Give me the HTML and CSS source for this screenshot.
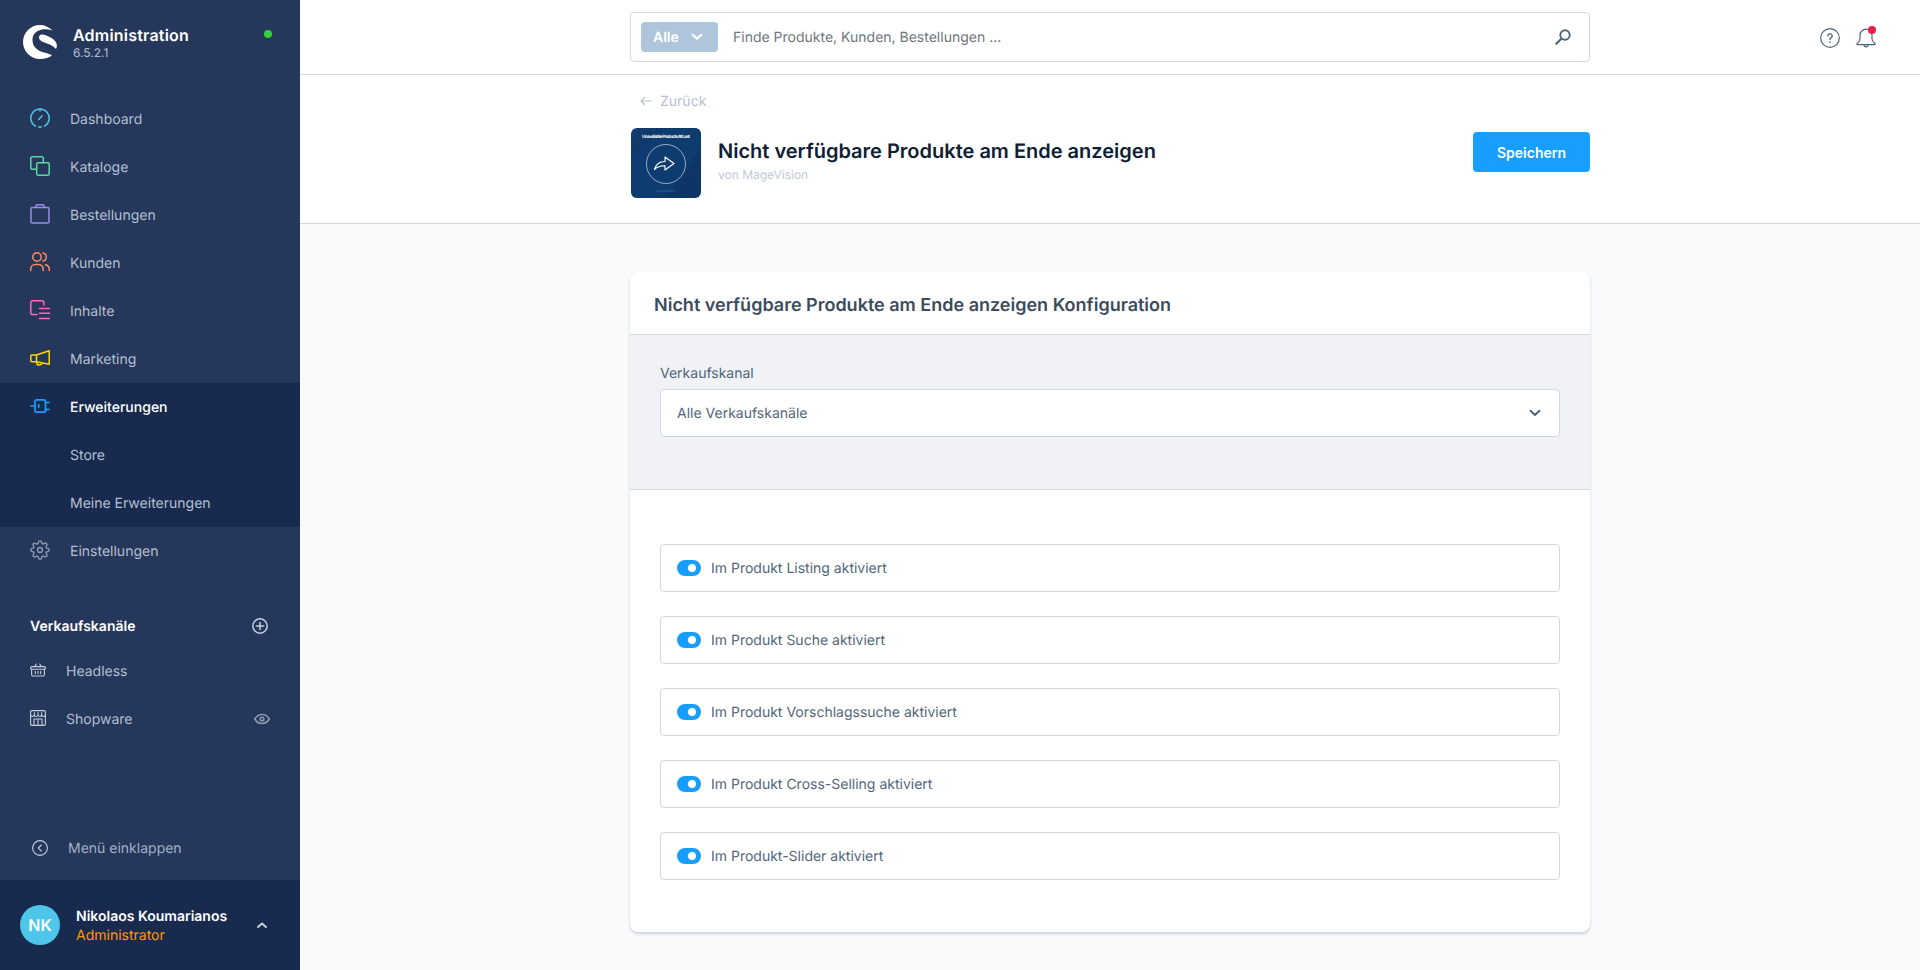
FILE: index.html
```html
<!DOCTYPE html>
<html lang="de">
<head>
    <meta charset="UTF-8">
    <meta name="viewport" content="width=device-width, initial-scale=1.0">
    <title>Nicht verfügbare Produkte am Ende anzeigen</title>
    <link rel="stylesheet" href="styles.css">
</head>
<body>
    <aside class="sidebar">
        <div class="brand">
            <svg class="brand-logo" width="34" height="34" viewBox="0 0 34 34" fill="#fff">
                <path d="M17 0C21.5 0 26 2 29.5 5.5C26 4.500 22 4 19 4.500C12 6 9.500 10 9.500 15C9.500 22 15 26 21 27.500C24 28.300 27 29 29 30.500C26 32.800 22 34 17 34C7.600 34 0 26.400 0 17C0 7.600 7.600 0 17 0Z"/>
                <path d="M19 9.500C24 10 33 14 33.800 19.500C34 21.500 33.500 23 33 24C30 20.500 26 19 21.500 17.500C18.500 16.500 16 15 16 12.500C16 10.500 17.500 9.300 19 9.500Z"/>
            </svg>
            <div class="brand-text">
                <div class="brand-title">Administration</div>
                <div class="brand-version">6.5.2.1</div>
            </div>
            <span class="status-dot"></span>
        </div>

        <nav class="menu">
            <a class="menu-item">
                <svg class="menu-icon" viewBox="0 0 20 20" fill="none" stroke="#4dc6e9" stroke-width="1.500" stroke-linecap="round" stroke-linejoin="round">
                    <path d="M5.500 18.200A9.200 9.200 0 1 1 14.500 18.200"/><path d="M8.700 18.900h2.600"/><path d="M8.700 11.500l3.200-3.600"/><path d="M10 .9v2"/>
                </svg>
                Dashboard
            </a>
            <a class="menu-item">
                <svg class="menu-icon" viewBox="0 0 20 20" fill="none" stroke="#57d9a3" stroke-width="1.500" stroke-linejoin="round">
                    <rect x="6.700" y="6.700" width="12.500" height="12.500" rx="1.500"/>
                    <path d="M6.700 13.300H2.300A1.500 1.500 0 0 1 .8 11.800V2.300A1.500 1.500 0 0 1 2.300 .8h9.500a1.500 1.500 0 0 1 1.500 1.500v4.400"/>
                </svg>
                Kataloge
            </a>
            <a class="menu-item">
                <svg class="menu-icon" viewBox="0 0 20 20" fill="none" stroke="#9a8ee5" stroke-width="1.500" stroke-linejoin="round">
                    <path d="M2.300 3.500h15.400a1.300 1.300 0 0 1 1.300 1.300v12.900a1.300 1.300 0 0 1-1.300 1.300H2.300A1.300 1.300 0 0 1 1 17.700V4.800A1.300 1.300 0 0 1 2.300 3.500Z"/>
                    <path d="M6 3.500V2a1.200 1.200 0 0 1 1.200-1.200h5.600A1.200 1.200 0 0 1 14 2v1.500"/>
                </svg>
                Bestellungen
            </a>
            <a class="menu-item">
                <svg class="menu-icon" viewBox="0 0 20 20" fill="none" stroke="#ff8a5c" stroke-width="1.500" stroke-linecap="round">
                    <circle cx="7" cy="5" r="4.200"/>
                    <path d="M.8 18.500v-1.500a4.500 4.500 0 0 1 4.500-4.500h3.400a4.500 4.500 0 0 1 4.500 4.500v1.500"/>
                    <path d="M13 .9a4.200 4.200 0 0 1 0 8.200"/>
                    <path d="M15.500 12.700a4.500 4.500 0 0 1 3.700 4.300v1.500"/>
                </svg>
                Kunden
            </a>
            <a class="menu-item">
                <svg class="menu-icon" viewBox="0 0 20 20" fill="none" stroke="#ff68b4" stroke-width="1.500" stroke-linecap="round" stroke-linejoin="round">
                    <path d="M7 14.500H2.300A1.500 1.500 0 0 1 .8 13V2.300A1.500 1.500 0 0 1 2.300 .8h10A1.500 1.500 0 0 1 13.800 2.300V5"/>
                    <path d="M9.500 8.500h10M9.500 13.300h10M9.500 18.500h10"/>
                </svg>
                Inhalte
            </a>
            <a class="menu-item">
                <svg class="menu-icon" viewBox="0 0 20 20" fill="none" stroke="#ffd500" stroke-width="1.500" stroke-linejoin="round">
                    <path d="M19.200 2.700V16.300L6.500 13.700V7Z"/>
                    <path d="M6.500 7H2A1.200 1.200 0 0 0 .8 8.200V12.500A1.200 1.200 0 0 0 2 13.700H6.500"/>
                    <path d="M6.500 13.700L7 16a1.200 1.200 0 0 0 1.400 .9L11 16.400a1.200 1.200 0 0 0 .9-1.300"/>
                </svg>
                Marketing
            </a>

            <div class="menu-group">
                <a class="menu-item is-active">
                    <svg class="menu-icon" viewBox="0 0 20 20" fill="none" stroke="#189eff" stroke-width="1.700" stroke-linecap="round" stroke-linejoin="round">
                        <rect x="5" y="3.800" width="10.500" height="12.400" rx="1.800"/>
                        <path d="M.8 10H5M15.500 6.500h3.700M15.500 13.500h3.700M8.700 8.800v2.400"/>
                    </svg>
                    Erweiterungen
                </a>
                <a class="menu-item menu-sub">Store</a>
                <a class="menu-item menu-sub">Meine Erweiterungen</a>
            </div>

            <a class="menu-item">
                <svg class="menu-icon" viewBox="0 0 24 24" fill="none" stroke="#8b99ae" stroke-width="1.700" stroke-linecap="round" stroke-linejoin="round">
                    <circle cx="12" cy="12" r="3"/>
                    <path d="M19.400 15a1.650 1.650 0 0 0 .33 1.820l.06.06a2 2 0 0 1 0 2.830 2 2 0 0 1-2.830 0l-.06-.06a1.650 1.650 0 0 0-1.820-.33 1.650 1.650 0 0 0-1 1.510V21a2 2 0 0 1-2 2 2 2 0 0 1-2-2v-.09A1.650 1.650 0 0 0 9 19.400a1.650 1.650 0 0 0-1.820.33l-.06.06a2 2 0 0 1-2.830 0 2 2 0 0 1 0-2.830l.06-.06a1.650 1.650 0 0 0 .33-1.820 1.650 1.650 0 0 0-1.510-1H3a2 2 0 0 1-2-2 2 2 0 0 1 2-2h.09A1.650 1.650 0 0 0 4.600 9a1.650 1.650 0 0 0-.33-1.820l-.06-.06a2 2 0 0 1 0-2.830 2 2 0 0 1 2.830 0l.06.06a1.650 1.650 0 0 0 1.820.33H9a1.650 1.650 0 0 0 1-1.510V3a2 2 0 0 1 2-2 2 2 0 0 1 2 2v.09a1.650 1.650 0 0 0 1 1.510 1.650 1.650 0 0 0 1.820-.33l.06-.06a2 2 0 0 1 2.830 0 2 2 0 0 1 0 2.830l-.06.06a1.650 1.650 0 0 0-.33 1.820V9a1.650 1.650 0 0 0 1.510 1H21a2 2 0 0 1 2 2 2 2 0 0 1-2 2h-.09a1.650 1.650 0 0 0-1.510 1z"/>
                </svg>
                Einstellungen
            </a>
        </nav>

        <div class="channels">
            <div class="channels-head">
                <span>Verkaufskanäle</span>
                <svg width="16" height="16" viewBox="0 0 16 16" fill="none" stroke="#c5cfdd" stroke-width="1.500" stroke-linecap="round">
                    <circle cx="8" cy="8" r="7.200"/><path d="M8 4.500v7M4.500 8h7"/>
                </svg>
            </div>
            <a class="channel">
                <svg class="channel-icon" viewBox="0 0 16 16" fill="none" stroke="#c5cfdd" stroke-width="1.100" stroke-linecap="round" stroke-linejoin="round">
                    <rect x=".6" y="4.600" width="14.800" height="2.600" rx="1"/>
                    <path d="M1.600 7.200v5.300a1.500 1.500 0 0 0 1.500 1.500h9.800a1.500 1.500 0 0 0 1.500-1.500V7.200"/>
                    <path d="M4.800 4.400L6.300 2M11.200 4.400L9.700 2M5.300 9.300v2.300M8 9.300v2.300M10.700 9.300v2.300"/>
                </svg>
                Headless
            </a>
            <a class="channel">
                <svg class="channel-icon" viewBox="0 0 16 16" fill="none" stroke="#c5cfdd" stroke-width="1.100" stroke-linejoin="round">
                    <rect x=".6" y=".6" width="14.800" height="14.800" rx="1.200"/>
                    <path d="M.6 5.300c1.200 1.500 3 1.500 3.700 0 .7 1.500 2.900 1.500 3.700 0 .8 1.500 3 1.500 3.700 0 .7 1.500 2.500 1.500 3.700 0"/>
                    <path d="M4 15.400V9h8v6.400M8 9v6.400M4.300 2.200v3.100M8 2.200v3.100M11.700 2.200v3.100"/>
                </svg>
                Shopware
                <svg class="channel-eye" width="16" height="12" viewBox="0 0 16 12" fill="none" stroke="#8b99ae" stroke-width="1.600">
                    <path d="M.8 6C2.500 3 5 1.500 8 1.500S13.500 3 15.200 6C13.500 9 11 10.500 8 10.500S2.500 9 .8 6Z"/>
                    <circle cx="8" cy="6" r="1.800"/>
                </svg>
            </a>
        </div>

        <a class="collapse">
            <svg width="16" height="16" viewBox="0 0 16 16" fill="none" stroke="#c5cfdd" stroke-width="1.100" stroke-linecap="round" stroke-linejoin="round">
                <circle cx="8" cy="8" r="7.400"/><path d="M9.300 5L6.300 8l3 3"/>
            </svg>
            Menü einklappen
        </a>

        <div class="user">
            <div class="avatar">NK</div>
            <div class="user-text">
                <div class="user-name">Nikolaos Koumarianos</div>
                <div class="user-role">Administrator</div>
            </div>
            <svg width="12" height="8" viewBox="0 0 12 8" fill="none" stroke="#c5cfdd" stroke-width="2" stroke-linecap="round" stroke-linejoin="round">
                <path d="M2 6l4-3.500L10 6"/>
            </svg>
        </div>
    </aside>

    <div class="main">
        <header class="topbar">
            <div class="search">
                <div class="search-type">
                    Alle
                    <svg width="12" height="8" viewBox="0 0 12 8" fill="none" stroke="#fff" stroke-width="2.200" stroke-linecap="round" stroke-linejoin="round">
                        <path d="M1.700 1.800L6 5.600l4.300-3.800"/>
                    </svg>
                </div>
                <div class="search-text">Finde Produkte, Kunden, Bestellungen ...</div>
                <svg width="16" height="16" viewBox="0 0 16 16" fill="none" stroke="#52667a" stroke-linecap="round">
                    <circle cx="10" cy="6" r="4.700" stroke-width="1.900"/><path d="M6.500 9.500L1.300 14.800" stroke-width="2.200"/>
                </svg>
            </div>
            <div class="top-actions">
                <svg width="20" height="20" viewBox="0 0 20 20" fill="none" stroke="#52667a" stroke-width="1.200" stroke-linecap="round">
                    <circle cx="10" cy="10" r="9.300"/>
                    <path d="M7.800 7.800A2.200 2.200 0 1 1 11.300 9.700C10.500 10.200 10 10.600 10 11.500" stroke-width="1.400"/>
                    <path d="M10 14.100v.1" stroke-width="1.600"/>
                </svg>
                <div class="bell">
                    <svg width="20" height="20" viewBox="0 0 20 20" fill="none" stroke="#52667a" stroke-width="1.200" stroke-linejoin="round">
                        <path d="M10 1.200A6 6 0 0 1 16 7.200V11c0 1.800 1 3 2.700 4.200.7.500.5 1.500-.4 1.500H1.700c-.9 0-1.100-1-.4-1.500C3 14 4 12.800 4 11V7.200A6 6 0 0 1 10 1.200Z"/>
                        <path d="M8 16.800a2 2 0 0 0 4 0"/>
                    </svg>
                    <span class="bell-dot"></span>
                </div>
            </div>
        </header>

        <section class="smartbar">
            <div class="smartbar-inner">
                <a class="back">
                    <svg width="12" height="10" viewBox="0 0 12 10" fill="none" stroke="#b6c2d1" stroke-width="1.200" stroke-linecap="round" stroke-linejoin="round">
                        <path d="M11 5H1M4.500 1.500L1 5l3.500 3.500"/>
                    </svg>
                    Zurück
                </a>
                <div class="plugin-row">
                    <svg class="plugin-thumb" width="70" height="70" viewBox="0 0 70 70">
                        <defs>
                            <linearGradient id="thumb" x1="0" y1="0" x2="1" y2="1">
                                <stop offset="0" stop-color="#123a6b"/>
                                <stop offset="1" stop-color="#0c3566"/>
                            </linearGradient>
                        </defs>
                        <rect width="70" height="70" fill="url(#thumb)"/>
                        <path d="M0 30L30 0H70V20L35 70H0Z" fill="#0f3f74" opacity=".6"/>
                        <text class="thumb-title" x="35" y="9.500" text-anchor="middle" textLength="48">Unavailable Products At Last</text>
                        <circle cx="35" cy="36" r="19.500" fill="none" stroke="#cfd8e6" stroke-width=".7"/>
                        <path d="M34 29v4.500c-5 0-9 2.500-10.500 8 3-3 6.500-3.800 10.500-3.700V42l9-6.500Z" fill="none" stroke="#fff" stroke-width="1.100" stroke-linejoin="round"/>
                        <text class="thumb-brand" x="35" y="64" text-anchor="middle">magevision</text>
                    </svg>
                    <div class="plugin-text">
                        <h1>Nicht verfügbare Produkte am Ende anzeigen</h1>
                        <div class="plugin-by">von MageVision</div>
                    </div>
                    <button class="save">Speichern</button>
                </div>
            </div>
        </section>

        <main class="content">
            <section class="card">
                <h2 class="card-title">Nicht verfügbare Produkte am Ende anzeigen Konfiguration</h2>
                <div class="card-filter">
                    <label class="field-label">Verkaufskanal</label>
                    <div class="field select">
                        <span>Alle Verkaufskanäle</span>
                        <svg width="12" height="8" viewBox="0 0 12 8" fill="none" stroke="#52667a" stroke-width="2" stroke-linecap="round" stroke-linejoin="round">
                            <path d="M1.500 1.800L6 6l4.500-4.200"/>
                        </svg>
                    </div>
                </div>
                <div class="card-body">
                    <div class="field toggle-row"><span class="toggle"></span><span>Im Produkt Listing aktiviert</span></div>
                    <div class="field toggle-row"><span class="toggle"></span><span>Im Produkt Suche aktiviert</span></div>
                    <div class="field toggle-row"><span class="toggle"></span><span>Im Produkt Vorschlagssuche aktiviert</span></div>
                    <div class="field toggle-row"><span class="toggle"></span><span>Im Produkt Cross-Selling aktiviert</span></div>
                    <div class="field toggle-row"><span class="toggle"></span><span>Im Produkt-Slider aktiviert</span></div>
                </div>
            </section>
        </main>
    </div>
</body>
</html>
```

FILE: styles.css
```css
* {
    box-sizing: border-box;
}
html, body {
    height: 100%;
}
body {
    margin: 0;
    display: flex;
    overflow: hidden;
    font-family: Inter, "Liberation Sans", sans-serif;
    font-size: 14px;
    color: #52667a;
    background-color: #f9fafb;
    text-rendering: geometricPrecision;
}

/* Sidebar */
.sidebar {
    width: 300px;
    height: 970px;
    flex-shrink: 0;
    display: flex;
    flex-direction: column;
    background-color: #25375a;
    color: #b3bfd3;
}
.brand {
    height: 95px;
    padding: 25px 28px 0 23px;
    display: flex;
    align-items: flex-start;
}
.brand-logo {
    flex-shrink: 0;
}
.brand-text {
    margin-left: 16px;
    flex: 1;
}
.brand-title {
    font-size: 16px;
    line-height: 20px;
    font-weight: 600;
    letter-spacing: .2px;
    color: #fff;
}
.brand-version {
    font-size: 12px;
    line-height: 16px;
    color: #b3bfd3;
}
.status-dot {
    width: 8px;
    height: 8px;
    margin-top: 5px;
    border-radius: 50%;
    background-color: #2fd23f;
}
.menu-item {
    height: 48px;
    padding-left: 30px;
    display: flex;
    align-items: center;
    gap: 20px;
}
.menu-icon {
    width: 20px;
    height: 20px;
    margin-bottom: 2px;
    flex-shrink: 0;
}
.menu-group {
    background-color: #182a4e;
}
.menu-item.is-active {
    color: #fff;
    font-weight: 500;
}
.menu-sub {
    padding-left: 70px;
}
.channels-head {
    height: 43px;
    margin-top: 29px;
    padding: 1px 32px 0 30px;
    display: flex;
    align-items: center;
    justify-content: space-between;
    color: #fff;
    font-weight: 600;
}
.channel {
    height: 48px;
    padding: 0 30px;
    display: flex;
    align-items: center;
    gap: 20px;
}
.channel-icon {
    width: 16px;
    height: 16px;
    margin-bottom: 2px;
    flex-shrink: 0;
}
.channel-eye {
    margin-left: auto;
}
.collapse {
    margin-top: auto;
    height: 64px;
    padding-left: 32px;
    display: flex;
    align-items: center;
    gap: 20px;
    color: #a3b0c5;
}
.user {
    height: 90px;
    padding: 0 32px 0 20px;
    display: flex;
    align-items: center;
    background-color: #182a4e;
}
.avatar {
    width: 40px;
    height: 40px;
    flex-shrink: 0;
    display: flex;
    align-items: center;
    justify-content: center;
    border-radius: 50%;
    background-color: #4dc6e9;
    color: #fff;
    font-size: 16px;
    font-weight: 600;
}
.user-text {
    flex: 1;
    margin-left: 16px;
    padding-top: 2px;
    line-height: 19px;
}
.user-name {
    color: #fff;
    font-weight: 600;
}
.user-role {
    color: #ff9800;
}

/* Top bar */
.main {
    flex: 1;
    min-width: 0;
    display: flex;
    flex-direction: column;
}
.topbar {
    height: 75px;
    flex-shrink: 0;
    display: flex;
    justify-content: center;
    padding-top: 12px;
    position: relative;
    background-color: #fff;
    border-bottom: 1px solid #d1d9e0;
}
.search {
    width: 960px;
    height: 50px;
    padding: 0 18px 0 10px;
    display: flex;
    align-items: center;
    background-color: #fff;
    border: 1px solid #d1d9e0;
    border-radius: 4px;
}
.search-type {
    width: 77px;
    height: 30px;
    padding: 0 15px 0 12px;
    display: flex;
    align-items: center;
    justify-content: space-between;
    border-radius: 4px;
    background-color: #afc5dc;
    color: #fff;
    font-weight: 600;
}
.search-text {
    flex: 1;
    margin-left: 15px;
    padding-top: 1px;
    color: #6f7680;
}
.top-actions {
    position: absolute;
    top: 28px;
    right: 44px;
    display: flex;
    gap: 16px;
}
.bell {
    position: relative;
    height: 20px;
}
.bell-dot {
    position: absolute;
    top: -2px;
    right: 0;
    width: 8px;
    height: 8px;
    border-radius: 50%;
    background-color: #e52149;
}

/* Smart bar */
.smartbar {
    height: 149px;
    flex-shrink: 0;
    display: flex;
    justify-content: center;
    background-color: #fff;
    border-bottom: 1px solid #d1d9e0;
}
.smartbar-inner {
    width: 960px;
    padding-top: 17px;
}
.back {
    height: 18px;
    padding-left: 10px;
    display: flex;
    align-items: center;
    gap: 8px;
    color: #b6c2d1;
}
.plugin-row {
    margin-top: 18px;
    padding-left: 1px;
    display: flex;
    align-items: flex-start;
}
.plugin-thumb {
    flex-shrink: 0;
    border-radius: 6px;
}
.thumb-title {
    font-family: Inter, sans-serif;
    font-size: 4.500px;
    font-weight: 700;
    fill: #fff;
}
.thumb-brand {
    font-family: Inter, sans-serif;
    font-size: 3.500px;
    fill: #2f6ea8;
}
.plugin-text {
    flex: 1;
    margin: 10px 0 0 17px;
}
.plugin-text h1 {
    margin: 0;
    font-size: 20px;
    line-height: 26px;
    font-weight: 600;
    color: #0f2033;
}
.plugin-by {
    margin-top: 3px;
    font-size: 12px;
    line-height: 16px;
    color: #c0cad6;
}
.save {
    width: 117px;
    height: 40px;
    margin-top: 4px;
    padding: 0;
    border: none;
    border-radius: 4px;
    background-color: #189eff;
    color: #fff;
    font-family: inherit;
    font-size: 14px;
    font-weight: 600;
}

/* Card */
.content {
    flex: 1;
    padding-top: 48px;
    display: flex;
    justify-content: center;
}
.card {
    width: 960px;
    height: 660px;
    overflow: hidden;
    background-color: #fff;
    border-radius: 8px;
    box-shadow: 0 2px 3px rgba(120, 138, 155, .35);
}
.card-title {
    height: 63px;
    margin: 0;
    padding: 5px 24px 0;
    display: flex;
    align-items: center;
    font-size: 18px;
    font-weight: 600;
    color: #3d4c5c;
    border-bottom: 1px solid #d1d9e0;
}
.card-filter {
    height: 155px;
    padding: 30px 30px 0;
    background-color: #f0f2f5;
    border-bottom: 1px solid #d1d9e0;
}
.field-label {
    display: block;
    margin-bottom: 6px;
    line-height: 18px;
}
.field {
    height: 48px;
    display: flex;
    align-items: center;
    background-color: #fff;
    border: 1px solid #d1d9e0;
    border-radius: 4px;
}
.select {
    padding: 0 18px 0 16px;
    justify-content: space-between;
}
.card-body {
    padding: 54px 30px 0;
    display: flex;
    flex-direction: column;
    gap: 24px;
}
.toggle-row {
    padding-left: 16px;
    gap: 10px;
}
.toggle {
    width: 24px;
    height: 16px;
    display: flex;
    align-items: center;
    justify-content: flex-end;
    padding-right: 5px;
    border-radius: 8px;
    background-color: #189eff;
}
.toggle::after {
    content: "";
    width: 8px;
    height: 8px;
    border-radius: 50%;
    background-color: #fff;
}
```
